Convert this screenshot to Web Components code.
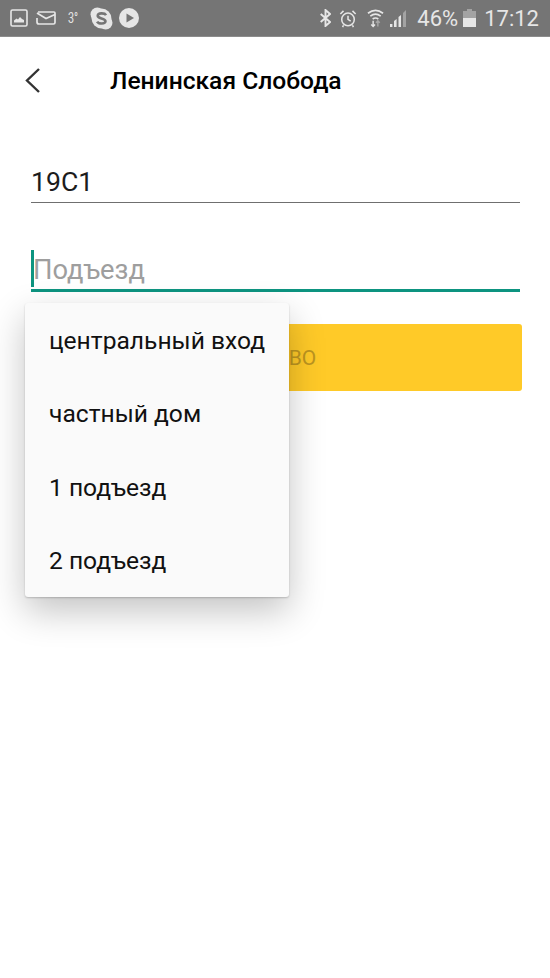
<!DOCTYPE html>
<html lang="ru">
<head>
<meta charset="utf-8">
<title>Ленинская Слобода</title>
<style>
  html, body { margin: 0; padding: 0; background: #fff; }
  body { width: 550px; height: 978px; overflow: hidden; font-family: Roboto, "Liberation Sans", sans-serif; }
</style>
</head>
<body>
<status-bar></status-bar>
<app-header>Ленинская Слобода</app-header>
<address-form>
  <text-field value="19С1"></text-field>
  <text-field placeholder="Подъезд" focused></text-field>
  <action-button>ГОТОВО</action-button>
  <drop-menu>
    <menu-item>центральный вход</menu-item>
    <menu-item>частный дом</menu-item>
    <menu-item>1 подъезд</menu-item>
    <menu-item>2 подъезд</menu-item>
  </drop-menu>
</address-form>

<script>
class StatusBar extends HTMLElement {
    constructor() {
        super();
        this.attachShadow({ mode: 'open' });
    }

    connectedCallback() {
        this.shadowRoot.innerHTML = `
            <style>
                :host { display: flex; align-items: center; height: 36px; background: #757575; color: #e6e6e6; border-bottom: 1px solid #8c8c8c; font-family: Roboto, sans-serif; }
                svg { display: block; flex: none; }
                .left, .right { display: flex; align-items: center; }
                .left { margin-left: 10px; }
                .right { margin-left: auto; margin-right: 11px; }
                .temp { font-size: 15px; margin-left: 12px; width: 22px; transform: scaleX(.72); transform-origin: left; }
                .pct { font-size: 22px; margin-left: 9px; }
                .time { font-size: 22px; margin-left: 8px; }
            </style>
            <div class="left">
                <svg width="18" height="18" viewBox="0 0 18 18" fill="none">
                    <rect x="1" y="1" width="16" height="16" rx="1.5" stroke="#e6e6e6" stroke-width="1.6"/>
                    <path d="M4 13.5 V11.5 L6.5 9.5 L8 10.5 L10 8 L12 10 L14 11 V13.5 Z" fill="#e6e6e6"/>
                </svg>
                <svg width="20" height="14" viewBox="0 0 20 14" fill="none" style="margin-left:8px">
                    <path d="M2 1 H18 Q19 1 19 2 V11.5 Q19 13 17.5 13 H3 Q1 13 1 11 V7" stroke="#e6e6e6" stroke-width="1.7"/>
                    <path d="M1 2 L10 7.5 L19 3.5" stroke="#e6e6e6" stroke-width="1.7"/>
                </svg>
                <span class="temp">3°</span>
                <svg width="23" height="23" viewBox="0 0 22 22">
                    <circle cx="7" cy="7" r="6.5" fill="#e6e6e6"/>
                    <circle cx="15" cy="15" r="6.5" fill="#e6e6e6"/>
                    <circle cx="11" cy="11" r="9.5" fill="#e6e6e6"/>
                    <path d="M15.4 7.8 C14 5.6 7.6 5.4 7.4 8.4 C7.2 11.4 14.8 10.4 14.8 13.6 C14.6 16.6 8.2 16.4 6.8 14" fill="none" stroke="#757575" stroke-width="2.5"/>
                </svg>
                <svg width="20" height="20" viewBox="0 0 20 20" style="margin-left:6px">
                    <circle cx="10" cy="10" r="10" fill="#e6e6e6"/>
                    <path d="M7.5 5.5 L15 10 L7.5 14.5 Z" fill="#757575"/>
                </svg>
            </div>
            <div class="right">
                <svg width="11" height="18" viewBox="0 0 11 18" fill="none" stroke="#e6e6e6" stroke-width="1.9">
                    <path d="M.7 5 L10 13 L5.5 17 V1 L10 5 L.7 13"/>
                </svg>
                <svg width="18" height="19" viewBox="0 0 20 20" fill="none" stroke="#e6e6e6" stroke-width="1.7" style="margin-left:8px">
                    <circle cx="10" cy="11" r="7"/>
                    <path d="M10 7 V11 L13 13 M1.5 5 L5 1.5 M18.5 5 L15 1.5 M5 17.5 L4 19.5 M15 17.5 L16 19.5"/>
                </svg>
                <svg width="17" height="20" viewBox="0 0 18 20" fill="none" stroke="#e6e6e6" stroke-width="1.8" style="margin-left:10px">
                    <path d="M1 5 Q9 -1 17 5 M3.5 8 Q9 4 14.5 8 M6 11 Q9 9 12 11"/>
                    <path d="M6.5 13 V19 M4.5 17 L6.5 19 L8.5 17" stroke-width="1.5"/>
                    <path d="M11.5 19 V13 M9.5 15 L11.5 13 L13.5 15" stroke="#a8a8a8" stroke-width="1.5"/>
                </svg>
                <svg width="18" height="18" viewBox="0 0 18 18" style="margin-left:6px">
                    <rect x="0" y="15" width="2.4" height="3" fill="#e6e6e6"/>
                    <path d="M4 18 V12 L6.6 10 V18 Z" fill="#e6e6e6"/>
                    <path d="M8.5 18 V8 L11 6 V18 Z" fill="#e6e6e6"/>
                    <path d="M13 18 V4 L16 1 V18 Z" fill="#a3a3a3"/>
                </svg>
                <span class="pct">46%</span>
                <svg width="13" height="18" viewBox="0 0 13 18" style="margin-left:5px">
                    <rect x="4" y="0" width="5" height="2" fill="#a3a3a3"/>
                    <rect x="0" y="2" width="13" height="16" fill="#a3a3a3"/>
                    <rect x="0" y="9" width="13" height="9" fill="#e6e6e6"/>
                </svg>
                <span class="time">17:12</span>
            </div>
        `;
    }
}

class AppHeader extends HTMLElement {
    constructor() {
        super();
        this.attachShadow({ mode: 'open' });
    }

    connectedCallback() {
        this.shadowRoot.innerHTML = `
            <style>
                :host { display: flex; align-items: center; height: 87px; padding-left: 25px; box-sizing: border-box; }
                svg { display: block; flex: none; }
                h1 { margin: 0 0 0 70px; font: 500 24.6px Roboto, sans-serif; color: #000; white-space: nowrap; }
            </style>
            <svg width="15" height="25" viewBox="0 0 15 25" fill="none" stroke="#333" stroke-width="2.4">
                <path d="M14 1 L2 12.5 L14 24"/>
            </svg>
            <h1><slot></slot></h1>
        `;
    }
}

class AddressForm extends HTMLElement {
    constructor() {
        super();
        this.attachShadow({ mode: 'open' });
    }

    connectedCallback() {
        this.shadowRoot.innerHTML = `
            <style>
                :host { display: block; position: relative; padding: 36px 31px 0 31px; }
                .stack { display: flex; flex-direction: column; }
            </style>
            <div class="stack"><slot></slot></div>
        `;
    }
}

class TextField extends HTMLElement {
    constructor() {
        super();
        this.attachShadow({ mode: 'open' });
    }

    connectedCallback() {
        const focused = this.hasAttribute('focused');
        const value = this.getAttribute('value');
        const text = value || this.getAttribute('placeholder');
        this.shadowRoot.innerHTML = `
            <style>
                :host { display: block; height: 87px; width: 489px; }
                .box { display: flex; align-items: center; height: 42px; border-bottom: ${focused ? '3px solid #0d9480' : '1.5px solid #6f6f6f'}; }
                .caret { width: 3px; height: 37px; background: #0d9480; flex: none; margin-right: -1px; }
                span { font: ${focused ? '27.3px' : '26.6px'} Roboto, sans-serif; color: ${value ? '#1c1c1c' : '#9e9e9e'}; padding-top: ${focused ? '3px' : '0'}; }
            </style>
            <div class="box">
                ${focused ? '<div class="caret"></div>' : ''}
                <span>${text}</span>
            </div>
        `;
    }
}

class ActionButton extends HTMLElement {
    constructor() {
        super();
        this.attachShadow({ mode: 'open' });
    }

    connectedCallback() {
        this.shadowRoot.innerHTML = `
            <style>
                :host { display: flex; align-items: center; justify-content: center; width: 491px; height: 67px; background: #ffca28; border-radius: 3px; margin-top: -10px; color: #bd9520; font: 21px Roboto, sans-serif; }
            </style>
            <slot></slot>
        `;
    }
}

class DropMenu extends HTMLElement {
    constructor() {
        super();
        this.attachShadow({ mode: 'open' });
    }

    connectedCallback() {
        this.shadowRoot.innerHTML = `
            <style>
                :host { display: block; position: absolute; left: 25px; top: 179px; width: 264px; height: 294px; box-sizing: border-box; padding-top: 1px; background: #fafafa; border-radius: 3px; box-shadow: 0 1px 2px rgba(0,0,0,.2), 0 14px 36px rgba(0,0,0,.24); }
            </style>
            <slot></slot>
        `;
    }
}

class MenuItem extends HTMLElement {
    constructor() {
        super();
        this.attachShadow({ mode: 'open' });
    }

    connectedCallback() {
        this.shadowRoot.innerHTML = `
            <style>
                :host { display: flex; align-items: center; height: 73.3px; padding-left: 24px; font: 24.6px Roboto, sans-serif; color: #111; white-space: nowrap; }
            </style>
            <slot></slot>
        `;
    }
}

customElements.define('status-bar', StatusBar);
customElements.define('app-header', AppHeader);
customElements.define('address-form', AddressForm);
customElements.define('text-field', TextField);
customElements.define('action-button', ActionButton);
customElements.define('drop-menu', DropMenu);
customElements.define('menu-item', MenuItem);
</script>
</body>
</html>
